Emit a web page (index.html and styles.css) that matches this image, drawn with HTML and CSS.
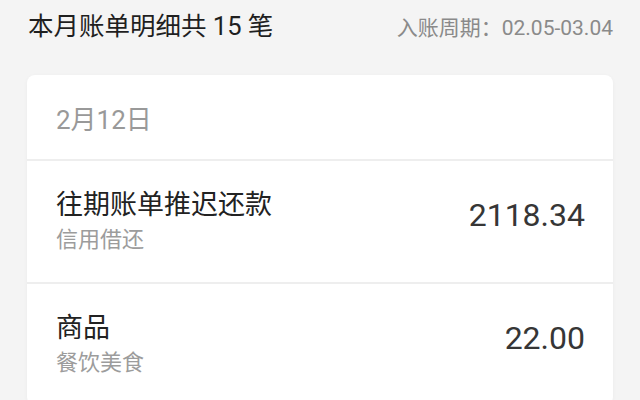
FILE: index.html
```html
<!DOCTYPE html>
<html lang="zh-CN">
<head>
    <meta charset="UTF-8">
    <meta name="viewport" content="width=device-width, initial-scale=1.0">
    <title>账单明细</title>
    <link rel="stylesheet" href="styles.css">
</head>
<body>

    <div class="header">
        <h1>本月账单明细共 15 笔</h1>
        <p class="period">入账周期：02.05-03.04</p>
    </div>

    <div class="card">
        <div class="day">2月12日</div>

        <div class="item">
            <div class="info">
                <h3>往期账单推迟还款</h3>
                <p>信用借还</p>
            </div>
            <span class="amount">2118.34</span>
        </div>

        <div class="item">
            <div class="info">
                <h3>商品</h3>
                <p>餐饮美食</p>
            </div>
            <span class="amount">22.00</span>
        </div>
    </div>

</body>
</html>
```

FILE: styles.css
```css
body {
    font-family: Roboto, "Noto Sans CJK SC", sans-serif;
    background: #f4f4f4;
    margin: 0;
    overflow: hidden;
}

.header {
    display: flex;
    justify-content: space-between;
    align-items: baseline;
    padding: 5px 27px 0 28px;
    height: 45px;
}

.header h1 {
    font-size: 25.5px;
    font-weight: 400;
    color: #1f1f1f;
    margin: 0;
}

.period {
    font-size: 21px;
    color: #8a8a8a;
    margin: 0;
}

.card {
    background: #ffffff;
    margin: 25px 27px 0 27px;
    border-radius: 8px;
    box-shadow: 0 1px 4px rgba(0, 0, 0, 0.04);
}

.day {
    height: 84px;
    display: flex;
    align-items: center;
    padding-left: 29px;
    font-size: 26px;
    color: #999999;
}

.item {
    height: 121px;
    display: flex;
    justify-content: space-between;
    align-items: center;
    padding: 0 28px 0 29px;
    border-top: 2px solid #eeeeee;
}

.info h3 {
    font-size: 27px;
    font-weight: 400;
    color: #222222;
    margin: 0;
    line-height: 1.25;
}

.info p {
    font-size: 22px;
    color: #9c9c9c;
    margin: 3px 0 0 0;
    line-height: 1.25;
}

.amount {
    font-size: 32px;
    color: #363636;
    margin-bottom: 14px;
}
```
